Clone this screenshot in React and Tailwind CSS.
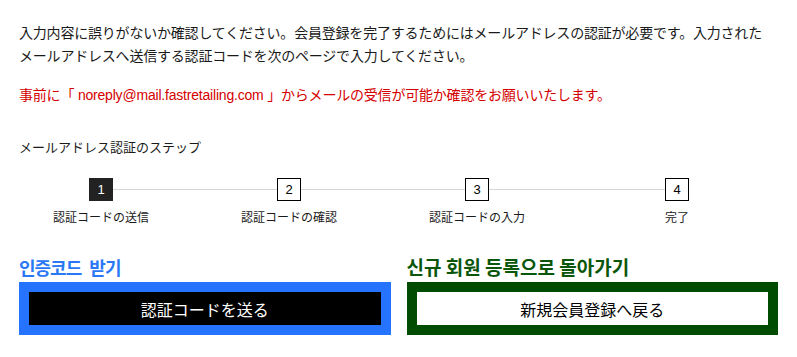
import React from "react";

const jp = { fontFamily: '"Noto Sans CJK JP", "Noto Sans", sans-serif' };
const kr = { fontFamily: '"Noto Sans CJK KR", "Noto Sans", sans-serif' };

function Box({ n, active }) {
  return (
    <div
      className={
        "w-[24px] h-[23px] flex items-center justify-center text-[13px] leading-none border " +
        (active ? "bg-[#222222] border-[#222222] text-white" : "bg-white border-black text-black")
      }
      style={{ fontFamily: '"Liberation Sans", Arial, sans-serif' }}
    >
      {n}
    </div>
  );
}

export default function App() {
  return (
    <div className="w-[797px] h-[357px] bg-white px-[19px] pt-[21px] text-[#1a1a1a]" style={jp}>
      <p className="text-[14px] leading-[23px] tracking-[-0.2px]">
        入力内容に誤りがないか確認してください。会員登録を完了するためにはメールアドレスの認証が必要です。入力された
        <br />
        メールアドレスへ送信する認証コードを次のページで入力してください。
      </p>
      <p className="mt-[16px] text-[14px] leading-[23px] text-[#d40000] tracking-[-0.2px]">
        事前に「
        <span className="font-['Liberation_Sans',Arial,sans-serif]"> noreply@mail.fastretailing.com </span>
        」からメールの受信が可能か確認をお願いいたします。
      </p>
      <p className="mt-[30px] text-[13px] leading-[20px]">メールアドレス認証のステップ</p>

      <div className="mt-[21px] flex items-center h-[23px]">
        <div className="ml-[70px]">
          <Box n="1" active />
        </div>
        <div className="w-[164px] h-px bg-[#d6d6d6]" />
        <Box n="2" />
        <div className="w-[164px] h-px bg-[#d6d6d6]" />
        <Box n="3" />
        <div className="w-[176px] h-px bg-[#d6d6d6]" />
        <Box n="4" />
      </div>

      <div className="mt-[7px] flex text-[12px] leading-[18px]">
        <div className="ml-[22px] w-[120px] text-center">認証コードの送信</div>
        <div className="ml-[68px] w-[120px] text-center">認証コードの確認</div>
        <div className="ml-[68px] w-[120px] text-center">認証コードの入力</div>
        <div className="ml-[80px] w-[120px] text-center">完了</div>
      </div>

      <div className="mt-[29px] grid grid-cols-2 gap-x-[16px]">
        <div>
          <div className="h-[24px] text-[18px] leading-[24px] font-bold tracking-[-1px] [word-spacing:5px] text-[#2a78f6]" style={kr}>
            인증코드 받기
          </div>
          <div className="mt-[3px] h-[53px] border-[10px] border-[#2673ff] bg-black flex items-center justify-center text-white text-[16px]">
            認証コードを送る
          </div>
        </div>
        <div>
          <div className="h-[24px] text-[19px] leading-[24px] font-bold text-[#0a560a]" style={kr}>
            신규 회원 등록으로 돌아가기
          </div>
          <div className="mt-[3px] h-[53px] border-[10px] border-[#004c00] bg-white flex items-center justify-center text-black text-[16px]">
            新規会員登録へ戻る
          </div>
        </div>
      </div>
    </div>
  );
}
